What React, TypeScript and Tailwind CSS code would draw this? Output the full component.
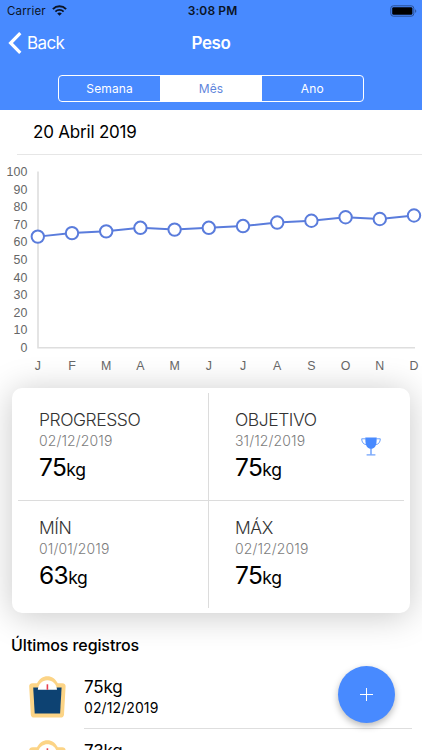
import React, { useState } from "react";
import clsx from "clsx";

const weights = [63, 65, 66, 68, 67, 68, 69, 71, 72, 74, 73, 75];
const months = ["J", "F", "M", "A", "M", "J", "J", "A", "S", "O", "N", "D"];
const ticks = [100, 90, 80, 70, 60, 50, 40, 30, 20, 10, 0];
const tabs = ["Semana", "Mês", "Ano"];

// chart origin is (38, 192.5), one kg is 1.76px high
const pointX = (i: number) => 37.8 + i * 34.2;
const valueY = (value: number) => 192.5 - value * 1.76;

function StatusBar() {
  return (
    <div className="grid h-[22px] grid-cols-3 items-center px-[7px] text-[11.5px] leading-none text-[#0b1426]">
      <div className="flex items-center gap-[6px] pt-px">
        <span className="tracking-[0.15px]">Carrier</span>
        <svg className="-mt-[2px]" width="15" height="11" viewBox="0 0 15 11" fill="none" stroke="#0b1426">
          <path d="M0.9 4.1C4.6 0.4 10.4 0.4 14.1 4.1" strokeWidth="2" />
          <path d="M3.4 6.6C5.7 4.4 9.3 4.4 11.6 6.6" strokeWidth="1.8" />
          <path d="M7.5 10.7L5.2 8.4C6.5 7.2 8.5 7.2 9.8 8.4Z" fill="#0b1426" stroke="none" />
        </svg>
      </div>
      <span className="pl-[3px] text-center text-xs font-semibold tracking-[0.1px] whitespace-nowrap">3:08 PM</span>
      <svg className="-mt-px -mr-[2px] justify-self-end" width="27" height="12" viewBox="0 0 27 12">
        <rect x="0.8" y="0.8" width="23" height="10.4" rx="2.6" fill="none" stroke="#2a4f94" />
        <rect x="2.2" y="2.2" width="20.2" height="7.6" rx="1.4" fill="#000" />
        <path d="M25.2 4.2C26.6 4.7 26.6 7.3 25.2 7.8Z" fill="#2a4f94" />
      </svg>
    </div>
  );
}

function WeightChart() {
  const line = weights.map((w, i) => `${pointX(i)},${valueY(w)}`).join(" ");
  return (
    <svg className="block h-[233px] w-full font-['Liberation_Sans']" viewBox="0 0 422 233" fontSize="12.4" fill="#666">
      <path d="M38 16.5V192.8H415" fill="none" stroke="#dedede" strokeWidth="1.6" />
      {ticks.map((t) => (
        <text key={t} x="27.3" y={valueY(t) + 4.4} textAnchor="end">{t}</text>
      ))}
      {months.map((m, i) => (
        <text key={i} x={pointX(i)} y="215.2" textAnchor="middle">{m}</text>
      ))}
      <polyline points={line} fill="none" stroke="#5a7cdc" strokeWidth="2" />
      {weights.map((w, i) => (
        <circle key={i} cx={pointX(i)} cy={valueY(w)} r="6.2" fill="#fff" stroke="#5a7cdc" strokeWidth="2" />
      ))}
    </svg>
  );
}

function Trophy() {
  return (
    <svg width="20" height="19" viewBox="0 0 20 19" fill="none" stroke="#5b95fb" strokeWidth="0.9">
      <path d="M4.6 1.8H0.7C0.8 4.9 2 7.3 5.5 7.7M15.4 1.8H19.3C19.2 4.9 18 7.3 14.5 7.7" />
      <path d="M4.3 0.5H15.7C15.7 6.5 15.2 11.6 10 11.9C4.8 11.6 4.3 6.5 4.3 0.5Z" fill="#488aff" stroke="none" />
      <path d="M10 11.5V17.5" strokeWidth="1.3" />
      <path d="M5.6 17.9H14.4" strokeWidth="1.1" />
    </svg>
  );
}

function Scale() {
  return (
    <svg width="37" height="42" viewBox="0 0 37 42">
      <path
        d="M3.6 7.2H8C10.5 2.8 14 0.2 18.4 0.2C22.8 0.2 26.3 2.8 28.8 7.2H33.2C35.6 7.2 36.8 8.6 36.6 10.6L35 38.4C34.9 40.4 33.7 41.5 31.7 41.5H5.1C3.1 41.5 1.9 40.4 1.8 38.4L0.2 10.6C0 8.6 1.2 7.2 3.6 7.2Z"
        fill="#fcd486"
      />
      <path d="M4.2 11.4H32.6L31.1 37.6H5.7Z" fill="#0d4272" />
      <path d="M8.8 13.8C9.2 8 13.2 4.2 18.4 4.2C23.6 4.2 27.6 8 28 13.8Z" fill="#fff" />
      <path d="M18.4 8.3V13.8" stroke="#e8404f" strokeWidth="1.6" />
    </svg>
  );
}

type StatProps = {
  title: string;
  date: string;
  value: number;
  className?: string;
  children?: React.ReactNode;
};

function Stat({ title, date, value, className, children }: StatProps) {
  return (
    <div className={clsx("flex items-center justify-between border-[#dcdcdc] pr-[23px]", className)}>
      <div className="pt-[2px]">
        <div className="text-[17.5px] leading-[22px] font-light tracking-[-0.45px] text-[#333]">{title}</div>
        <div className="text-[14px] leading-5 font-light tracking-[0.12px] text-[#7c7c7c]">{date}</div>
        <div className="text-[24.5px] leading-8 tracking-[-0.6px] text-black">
          {value}
          <span className="text-[17.5px] tracking-[-0.3px]">kg</span>
        </div>
      </div>
      {children}
    </div>
  );
}

function Entry({ weight, date }: { weight: number; date: string }) {
  return (
    <div className="flex h-[64px]">
      <div className="w-[84px] shrink-0 pt-[11px] pl-[29px]">
        <Scale />
      </div>
      <div className="mr-[10px] flex-1 border-b border-[#dedede] pt-[11px] text-black">
        <div className="text-[17px] leading-[22px] tracking-[-0.2px]">{weight}kg</div>
        <div className="text-[14px] leading-5 tracking-[0.1px]">{date}</div>
      </div>
    </div>
  );
}

export default function App() {
  const [activeTab, setActiveTab] = useState("Mês");
  return (
    <div className="relative h-[750px] w-[422px] overflow-hidden bg-white font-['Inter','Liberation_Sans',sans-serif]">
      <header className="h-[110px] bg-[#488aff]">
        <StatusBar />
        <div className="grid h-[42px] grid-cols-3 items-center text-white">
          <div className="flex items-center gap-[5px] pl-[8px]">
            <svg width="14" height="22" viewBox="0 0 14 22" fill="none" stroke="#fff" strokeWidth="3.2">
              <path d="M12.3 1.2L2.6 11L12.3 20.8" />
            </svg>
            <span className="pt-[2px] text-[17px] tracking-[-0.6px]">Back</span>
          </div>
          <h1 className="pt-[2px] text-center text-[17px] font-semibold tracking-[-0.4px]">Peso</h1>
        </div>
        <div className="mx-auto mt-[10.5px] grid h-[27px] w-[306px] grid-cols-3 overflow-hidden rounded-[4px] border border-white">
          {tabs.map((tab) => (
            <button
              key={tab}
              onClick={() => setActiveTab(tab)}
              className={clsx(
                "pt-[2px] text-[12px] leading-none tracking-[0.15px]",
                activeTab === tab ? "bg-white text-[#5f86dc]" : "text-white"
              )}
            >
              {tab}
            </button>
          ))}
        </div>
      </header>

      <div className="ml-[17px] flex h-[45px] items-center border-b border-[#e6e6e6] pt-[2px] pl-[16px] text-[17px] tracking-[-0.2px] text-black">
        20 Abril 2019
      </div>

      <WeightChart />

      <section className="mx-[12px] grid h-[225px] grid-cols-[191px_1fr] grid-rows-2 rounded-[10px] bg-white px-[6px] py-[5px] shadow-[0_3px_34px_rgba(0,0,0,0.22)]">
        <Stat title="PROGRESSO" date="02/12/2019" value={75} className="border-r border-b pl-[21px]" />
        <Stat title="OBJETIVO" date="31/12/2019" value={75} className="border-b pl-[26px]">
          <Trophy />
        </Stat>
        <Stat title="MÍN" date="01/01/2019" value={63} className="border-r pl-[21px]" />
        <Stat title="MÁX" date="02/12/2019" value={75} className="pl-[26px]" />
      </section>

      <h2 className="mt-[20px] pl-[11px] text-[16px] leading-6 font-medium tracking-[-0.1px] text-black">
        Últimos registros
      </h2>
      <div className="mt-[8px]">
        <Entry weight={75} date="02/12/2019" />
        <Entry weight={73} date="01/11/2019" />
      </div>

      {/* floating add button */}
      <button className="absolute top-[666px] left-[338px] grid size-[57px] place-items-center rounded-full bg-[#488aff] shadow-[0_3px_7px_rgba(0,0,0,0.28)]">
        <svg width="13" height="13" viewBox="0 0 13 13" stroke="#fff" strokeWidth="1">
          <path d="M6.5 0V13M0 6.5H13" />
        </svg>
      </button>
    </div>
  );
}
